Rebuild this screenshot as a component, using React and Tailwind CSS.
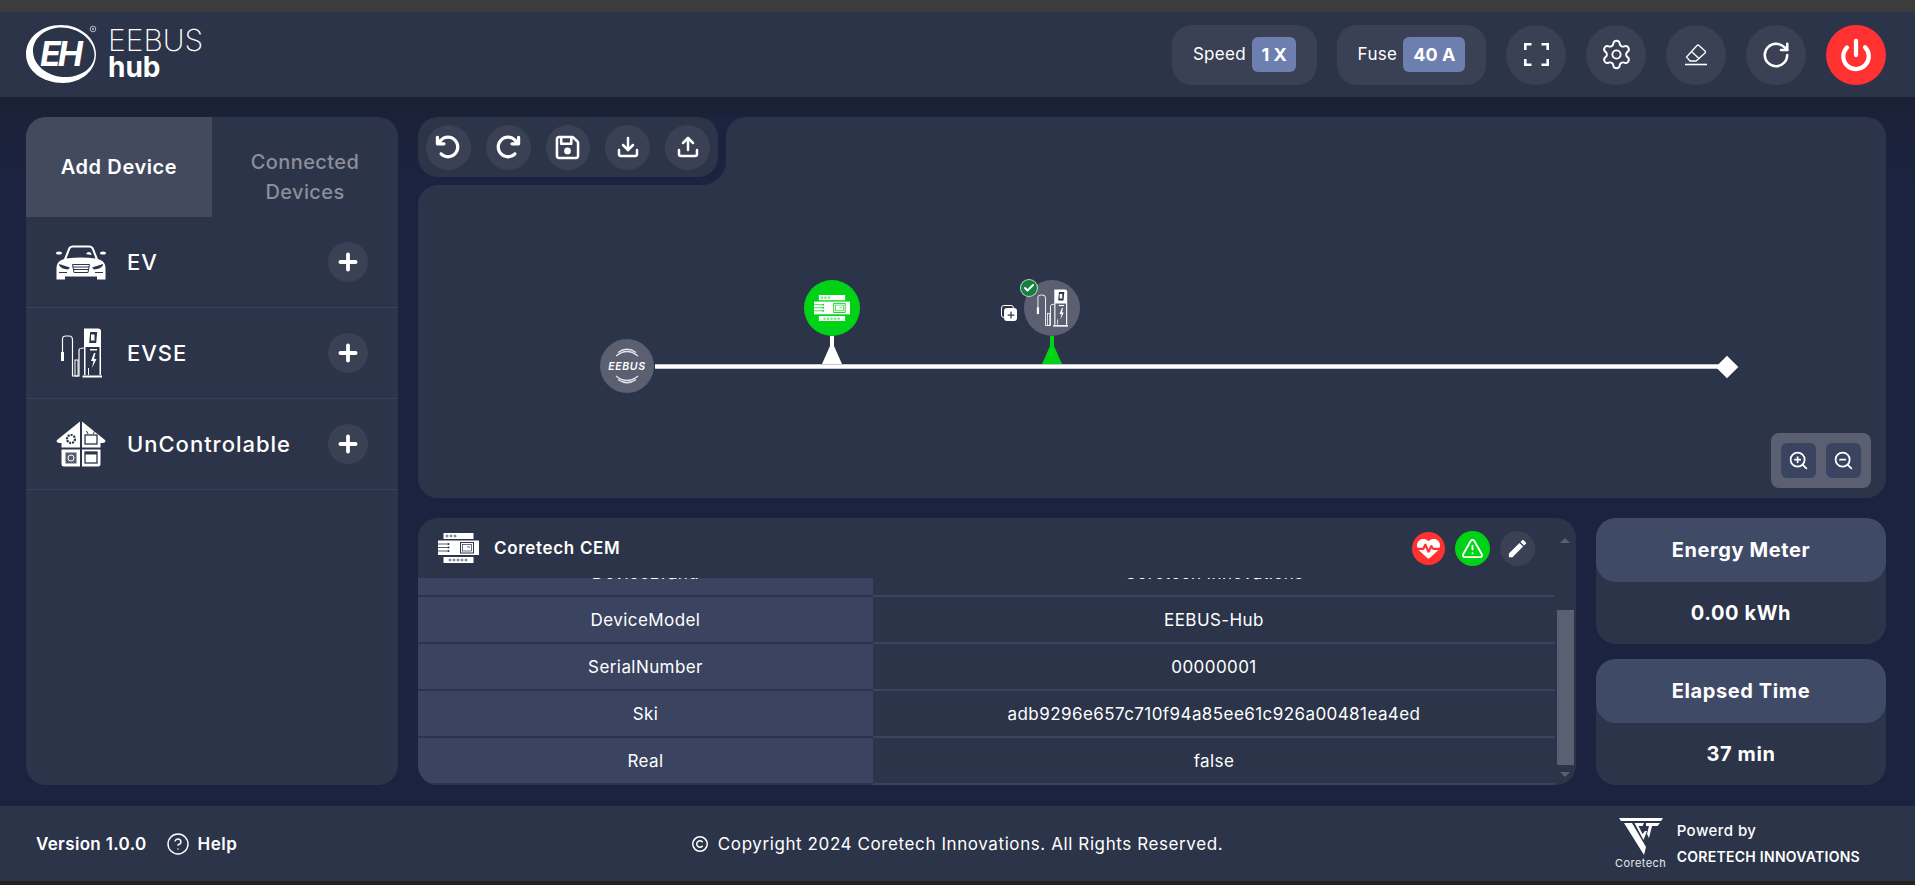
import { Plus, RotateCw, Settings, Power, Download, Upload, ZoomIn, ZoomOut, CircleHelp, TriangleAlert, Check } from 'lucide-react';
import { FaArrowRotateLeft, FaArrowRotateRight, FaRegFloppyDisk, FaHeartPulse, FaRegCopyright } from 'react-icons/fa6';
import { MdEdit } from 'react-icons/md';

function EhLogo() {
  return (
    <svg width="78" height="60" viewBox="0 0 78 60" className="shrink-0">
      <path
        fillRule="evenodd"
        fill="#fff"
        d="M35 0C54 0 70 13 70 29C70 46 55 58 37 58C17 58 0 46 0 29C0 13 15 0 35 0ZM35 2.500C21 2.500 7 12 7 26C7 40 21 51 37 52C53 53 69 44 68.500 29C68 15 53 2.500 35 2.500Z"
      />
      <text x="14" y="41" fill="#fff" fontSize="34" fontWeight="700" fontStyle="italic" fontFamily="Inter, sans-serif" letterSpacing="-3">EH</text>
      <circle cx="67" cy="4" r="2.800" fill="none" stroke="#c8cad2" strokeWidth="0.900" />
      <circle cx="67" cy="4" r="1" fill="#c8cad2" />
    </svg>
  );
}

function CarIcon() {
  return (
    <svg width="50" height="35" viewBox="0 0 50 35">
      <path fill="#fff" d="M8 14L12 4Q13 0.500 17 0.500H33Q37 0.500 38 4L42 14Q49 16 49.500 22V34.500H41V31.500H9V34.500H0.500V22Q1 16 8 14Z" />
      <ellipse cx="3" cy="8" rx="3" ry="1.600" fill="#fff" />
      <ellipse cx="47" cy="8" rx="3" ry="1.600" fill="#fff" />
      <path fill="#2c3449" d="M10.500 13.500L14 4.500Q14.500 2.500 16.500 2.500H33.500Q35.500 2.500 36 4.500L39.500 13.500Q25 11.500 10.500 13.500Z" />
      <path fill="#fff" d="M30 9Q32 5.500 35 8L35.500 10Q32 9.500 30 9Z" />
      <path fill="#2c3449" d="M3 19L14 22.500L12 24.500Q5 24 3 20Z M47 19L36 22.500L38 24.500Q45 24 47 20Z" />
      <path fill="none" stroke="#2c3449" strokeWidth="1" d="M16.500 19.500H33.500L32 27.500H18Z M17 22H33 M17.500 24.500H32.500" />
      <path fill="#2c3449" d="M3 27H11V28H3Z M39 27H47V28H39Z" />
    </svg>
  );
}

function EvseIcon({ className = '' }) {
  return (
    <svg width="42" height="50" viewBox="0 0 42 50" className={className}>
      <path fill="none" stroke="#fff" strokeWidth="1.200" d="M2.500 24V11Q2.500 8 6 8H9Q12.500 8 12.500 12V48H19V22Q19 20 24 20" />
      <rect x="1" y="24" width="3" height="9" fill="#fff" />
      <rect x="15" y="32" width="3" height="16" fill="none" stroke="#fff" strokeWidth="1" />
      <path fill="#fff" d="M24 0.500H38Q41 0.500 41 3V47H39.500V19H25.500V47H24Z" />
      <rect x="29" y="4" width="7" height="11" fill="#2c3449" transform="skewX(-5) translate(1.500 0)" />
      <rect x="31" y="6.500" width="3.500" height="6" fill="#fff" />
      <rect x="30" y="21" width="7" height="1.500" fill="#fff" />
      <path fill="#fff" d="M34 25L31 33H33.500L32 40L36.500 31H34L35.500 25Z" />
      <rect x="28" y="40" width="1" height="7" fill="#fff" />
      <rect x="22.500" y="47.500" width="19.500" height="2" fill="#fff" />
    </svg>
  );
}

function HouseIcon() {
  return (
    <svg width="50" height="46" viewBox="0 0 50 46">
      <path fill="#fff" d="M24 0.500V26.500H5.500V22H3Q-0.500 21.500 1 19Z M26 0.500V26.500H44.500V22H47Q50.500 21.500 49 19Z" />
      <path fill="#fff" d="M5.500 28.500H24V45.500H8Q5.500 45.500 5.500 43Z M26 28.500H44.500V43Q44.500 45.500 42 45.500H26Z" />
      <circle cx="15" cy="18" r="4" fill="none" stroke="#2c3449" strokeWidth="2.200" strokeDasharray="2 1" />
      <rect x="29" y="14" width="12" height="9" fill="none" stroke="#2c3449" strokeWidth="1.300" />
      <path fill="none" stroke="#2c3449" strokeWidth="1" d="M32 13L30.500 10M37 13L39 10" />
      <rect x="9.500" y="31.500" width="11" height="11" fill="#2c3449" opacity="0.800" />
      <circle cx="15" cy="37" r="3" fill="none" stroke="#fff" strokeWidth="1" />
      <rect x="29" y="31" width="12" height="11" fill="none" stroke="#2c3449" strokeWidth="1.300" />
      <rect x="29" y="31" width="12" height="2.500" fill="#2c3449" />
    </svg>
  );
}

function CemIcon({ width = 41, detail = '#2c3449' }) {
  const topDots = [9, 13, 17];
  const bottomDots = [12, 16, 20, 24, 28];
  return (
    <svg width={width} viewBox="0 0 41 30">
      <rect x="5.500" y="0" width="30" height="6" fill="#fff" />
      <rect x="0" y="7.500" width="41" height="14.500" fill="#fff" />
      <rect x="5.500" y="24" width="30" height="6" fill="#fff" />
      {topDots.map((x) => (
        <circle key={x} cx={x} cy="3" r="1" fill="none" stroke={detail} strokeWidth="0.700" />
      ))}
      {bottomDots.map((x) => (
        <circle key={x} cx={x} cy="27" r="1" fill="none" stroke={detail} strokeWidth="0.700" />
      ))}
      <path stroke={detail} strokeWidth="0.800" d="M0 11H10M0 14.500H10M0 18H10" />
      <circle cx="10.500" cy="11" r="1" fill={detail} />
      <circle cx="10.500" cy="14.500" r="1" fill={detail} />
      <circle cx="10.500" cy="18" r="1" fill={detail} />
      <rect x="22.500" y="9.500" width="13" height="10.500" fill="none" stroke={detail} strokeWidth="1" />
      <rect x="24.500" y="11.500" width="9" height="6.500" fill="none" stroke={detail} strokeWidth="0.700" />
      <path fill="none" stroke={detail} strokeWidth="0.700" d="M29 14H32" />
    </svg>
  );
}

function EebusMark() {
  return (
    <svg width="54" height="54" viewBox="0 0 54 54">
      <circle cx="27" cy="27" r="27" fill="#5a6072" />
      <path fill="none" stroke="#e6e7eb" strokeWidth="1.300" d="M16 17Q27 8 38 17 M18 13.500Q27 7 36 13.500 M16 37Q27 46 38 37 M18 40.500Q27 47 36 40.500" />
      <text x="27" y="31" textAnchor="middle" fill="#fff" fontSize="10.500" fontWeight="600" fontStyle="italic" fontFamily="Inter, sans-serif" letterSpacing="0.600">EEBUS</text>
    </svg>
  );
}

function CoretechLogo() {
  return (
    <div className="flex flex-col items-center w-[52px]">
      <svg width="44" height="37" viewBox="0 0 44 37">
        <path fill="#fff" d="M0 0H44L42 3H2Z" />
        <path fill="#fff" d="M5 5H13L27 29L25 37Z" />
        <path fill="#fff" d="M15.500 5H25L23.500 8H19.500L23.500 16L26 13H28L24.500 22Z" />
        <path fill="#fff" d="M27 5H41L38.500 8H33L30 20L28 16L30 8H27Z" />
      </svg>
      <span className="text-[11px] leading-none mt-[3px] tracking-[0.04em] text-[#e8e9ec]">Coretech</span>
    </div>
  );
}

function FullscreenIcon() {
  return (
    <svg width="25" height="23" viewBox="0 0 25 23" fill="none" stroke="#fff" strokeWidth="2.600">
      <path d="M1.300 7V1.300H7.500M17.500 1.300H23.700V7M23.700 16V21.700H17.500M7.500 21.700H1.300V16" />
    </svg>
  );
}

function EraserIcon() {
  return (
    <svg width="24" height="22" viewBox="0 0 24 22" fill="none" stroke="#fff" strokeWidth="1.300">
      <path d="M6 17L2.500 13L13 1.500Q14 0.500 15 1.500L21 7Q22 8 21 9L12 17Z" />
      <path d="M7.500 7.500L15.500 15" />
      <path d="M1 20.500H23" strokeWidth="1.600" />
    </svg>
  );
}

function HeaderCircle({ children, className = 'bg-[#3b4154]' }) {
  return <div className={`w-[60px] h-[60px] rounded-full flex items-center justify-center ${className}`}>{children}</div>;
}

function HeaderStat({ label, value, className, badgeWidth }) {
  return (
    <div className={`h-[60px] rounded-[20px] bg-[#3b4154] flex items-center justify-center gap-[6px] ${className}`}>
      <span className="text-[17px] text-white tracking-[0.02em]">{label}</span>
      <span className={`h-[35px] rounded-[6px] bg-[#6d7fae] flex items-center justify-center text-[18px] font-bold text-white ${badgeWidth}`}>{value}</span>
    </div>
  );
}

function DeviceRow({ icon, name }) {
  return (
    <div className="h-[91px] border-b border-[#38415c] pl-[30px] pr-[30px] flex items-center">
      <div className="w-[50px] flex justify-center shrink-0">{icon}</div>
      <span className="ml-[21px] text-[22px] font-medium text-white tracking-[0.045em]">{name}</span>
      <div className="ml-auto w-10 h-10 rounded-full bg-[#3b4154] flex items-center justify-center">
        <Plus size={26} color="#fff" strokeWidth={3.500} />
      </div>
    </div>
  );
}

function ToolButton({ children }) {
  return <div className="w-[45px] h-[45px] rounded-full bg-[#3b4154] flex items-center justify-center text-white">{children}</div>;
}

function ZoomButton({ children }) {
  return <div className="w-[35px] h-[35px] rounded-[6px] bg-[#3a4461] flex items-center justify-center">{children}</div>;
}

function Pin({ color, className }) {
  return (
    <svg width="20" height="28" viewBox="0 0 20 28" className={`absolute ${className}`}>
      <path fill={color} d="M8 0H12V10L20 28H0L8 10Z" />
    </svg>
  );
}

function StatCard({ title, value }) {
  return (
    <div className="flex-1 rounded-[20px] bg-[#2c3449] flex flex-col">
      <div className="h-[64px] rounded-[20px] bg-[#3f4a67] flex items-center justify-center text-[20px] font-bold text-white tracking-[0.03em]">{title}</div>
      <div className="flex-1 flex items-center justify-center text-[20px] font-bold text-white tracking-[0.03em]">{value}</div>
    </div>
  );
}

const rows = [
  ['DeviceBrand', 'Coretech Innovations'],
  ['DeviceModel', 'EEBUS-Hub'],
  ['SerialNumber', '00000001'],
  ['Ski', 'adb9296e657c710f94a85ee61c926a00481ea4ed'],
  ['Real', 'false'],
];

export default function App() {
  return (
    <div className="h-[885px] flex flex-col overflow-hidden bg-[#1c2340] font-['Inter',sans-serif] text-white">
      <div className="h-3 bg-[#3c3c3c]" />

      <header className="h-[85px] bg-[#2c3449] pl-[26px] pr-[29px] flex items-center">
        <div className="flex items-center">
          <EhLogo />
          <div className="flex flex-col ml-[4px] -mt-[2px]">
            <span className="text-[30px] leading-[27px] font-extralight">EEBUS</span>
            <span className="text-[28px] leading-[26px] font-bold">hub</span>
          </div>
        </div>
        <div className="ml-auto flex items-center gap-5">
          <HeaderStat label="Speed" value="1 X" className="w-[145px]" badgeWidth="w-[44px]" />
          <HeaderStat label="Fuse" value="40 A" className="w-[149px]" badgeWidth="w-[62px]" />
          <HeaderCircle><FullscreenIcon /></HeaderCircle>
          <HeaderCircle><Settings size={33} color="#fff" strokeWidth={1.400} /></HeaderCircle>
          <HeaderCircle><EraserIcon /></HeaderCircle>
          <HeaderCircle><RotateCw size={30} color="#fff" strokeWidth={2} /></HeaderCircle>
          <HeaderCircle className="bg-[#ff3131]"><Power size={34} color="#fff" strokeWidth={3} /></HeaderCircle>
        </div>
      </header>

      <main className="flex-1 flex gap-5 pl-[26px] pr-[29px] pt-5 pb-[21px] bg-linear-to-b from-[#1a2136] to-[#1c2340] to-[12%]">
        <aside className="w-[372px] shrink-0 rounded-[20px] bg-[#2c3449] overflow-hidden">
          <div className="h-[100px] flex">
            <div className="w-[186px] bg-[#434a5e] flex items-center justify-center text-[20px] font-semibold tracking-[0.03em]">Add Device</div>
            <div className="flex-1 pt-[20px] flex items-center justify-center text-center text-[20px] leading-[30px] font-medium text-[#8b8f9b] tracking-[0.02em]">
              Connected
              <br />
              Devices
            </div>
          </div>
          <DeviceRow icon={<CarIcon />} name="EV" />
          <DeviceRow icon={<EvseIcon />} name="EVSE" />
          <DeviceRow icon={<HouseIcon />} name="UnControlable" />
        </aside>

        <div className="flex-1 flex flex-col gap-5 min-w-0">
          <section className="relative h-[381px] rounded-[20px] bg-[#2c3449] overflow-hidden">
            <div className="absolute left-0 top-0 pr-2 pb-2 bg-[#1c2340] rounded-br-[24px]">
              <div className="h-[60px] w-[300px] px-2 rounded-[20px] bg-[#2c3449] flex items-center gap-[15px]">
                <ToolButton><FaArrowRotateLeft size={26} /></ToolButton>
                <ToolButton><FaArrowRotateRight size={26} /></ToolButton>
                <ToolButton><FaRegFloppyDisk size={27} /></ToolButton>
                <ToolButton><Download size={24} strokeWidth={2.500} /></ToolButton>
                <ToolButton><Upload size={24} strokeWidth={2.500} /></ToolButton>
              </div>
            </div>
            <div className="absolute left-0 top-[68px] w-5 h-5 bg-[#1c2340]">
              <div className="w-5 h-5 rounded-tl-[20px] bg-[#2c3449]" />
            </div>
            <div className="absolute left-[308px] top-0 w-5 h-5 bg-[#1c2340]">
              <div className="w-5 h-5 rounded-tl-[20px] bg-[#2c3449]" />
            </div>

            <div className="absolute left-[237px] top-[247px] w-[1072px] h-[5px] bg-white border-y border-[#c4c7cf]" />
            <div className="absolute left-[182px] top-[222px]"><EebusMark /></div>
            <div className="absolute left-[1301px] top-[242px] w-4 h-4 bg-white rotate-45" />

            <Pin color="#ffffff" className="left-[404px] top-[219px]" />
            <div className="absolute left-[386px] top-[163px] w-14 h-14 rounded-full bg-[#00d315] flex items-center justify-center">
              <CemIcon width={36} detail="#00d315" />
            </div>

            <Pin color="#00d315" className="left-[624px] top-[219px]" />
            <div className="absolute left-[606px] top-[163px] w-14 h-14 rounded-full bg-[#5a6072] flex items-center justify-center">
              <EvseIcon className="w-[32px] h-[38px]" />
            </div>
            <div className="absolute left-[602px] top-[162px] w-[18px] h-[18px] rounded-full bg-[#15803d] border border-white/70 flex items-center justify-center">
              <Check size={12} color="#fff" strokeWidth={4} />
            </div>
            <div className="absolute left-[583px] top-[188px] w-[13px] h-[13px] rounded-[3px] border border-white" />
            <div className="absolute left-[586px] top-[191px] w-[13px] h-[13px] rounded-[3px] bg-white flex items-center justify-center">
              <Plus size={10} color="#2c3449" strokeWidth={3} />
            </div>

            <div className="absolute right-[15px] bottom-[10px] w-[100px] h-[55px] rounded-[8px] bg-[#5a6072] flex items-center justify-center gap-[10px]">
              <ZoomButton><ZoomIn size={21} color="#fff" strokeWidth={2} /></ZoomButton>
              <ZoomButton><ZoomOut size={21} color="#fff" strokeWidth={2} /></ZoomButton>
            </div>
          </section>

          <div className="flex-1 flex gap-5 min-h-0">
            <section className="flex-1 min-w-0 rounded-[20px] bg-[#2c3449] overflow-hidden flex flex-col">
              <div className="h-[60px] shrink-0 pl-5 pr-[41px] flex items-center">
                <CemIcon width={41} />
                <span className="ml-[15px] mt-[2px] text-[17px] font-semibold tracking-[0.04em]">Coretech CEM</span>
                <div className="ml-auto flex items-center gap-[10px]">
                  <div className="w-[33px] h-[33px] rounded-full bg-[#ff3131] flex items-center justify-center"><FaHeartPulse size={23} color="#fff" /></div>
                  <div className="w-[35px] h-[35px] rounded-full bg-[#00d315] flex items-center justify-center"><TriangleAlert size={23} color="#fff" strokeWidth={2} /></div>
                  <div className="w-[35px] h-[35px] rounded-full bg-[#3b4154] flex items-center justify-center"><MdEdit size={23} color="#fff" /></div>
                </div>
              </div>
              <div className="flex-1 flex min-h-0">
                <div className="flex-1 min-w-0 overflow-hidden">
                  <div className="-mt-[28px]">
                    {rows.map(([name, value]) => (
                      <div key={name} className="h-[47px] grid grid-cols-[455px_1fr] text-[17px] tracking-[0.025em]">
                        <div className="bg-[#3a4460] border-b-2 border-[#2c3449] pt-[3px] flex items-center justify-center">{name}</div>
                        <div className="border-b-2 border-[#3a4460] pt-[3px] flex items-center justify-center">{value}</div>
                      </div>
                    ))}
                  </div>
                </div>
                <div className="w-[21px] shrink-0 relative">
                  <div className="absolute right-[2px] top-[32px] w-[17px] h-[155px] bg-[#5a6072]" />
                  <div className="absolute left-[5px] top-[-40px] w-0 h-0 border-x-[5px] border-x-transparent border-b-[5px] border-b-[#5a6072]" />
                  <div className="absolute left-[5px] bottom-[8px] w-0 h-0 border-x-[5px] border-x-transparent border-t-[5px] border-t-[#5a6072]" />
                </div>
              </div>
            </section>
            <div className="w-[290px] shrink-0 flex flex-col gap-[15px]">
              <StatCard title="Energy Meter" value="0.00 kWh" />
              <StatCard title="Elapsed Time" value="37 min" />
            </div>
          </div>
        </div>
      </main>

      <footer className="h-[75px] bg-[#2c3449] pl-9 pr-[55px] flex items-center">
        <div className="flex-1 flex items-center">
          <span className="mt-[2px] text-[17px] font-semibold tracking-[0.02em]">Version 1.0.0</span>
          <CircleHelp size={24} color="#fff" strokeWidth={1.400} className="ml-[20px]" />
          <span className="ml-[7px] mt-[2px] text-[17px] font-semibold tracking-[0.03em]">Help</span>
        </div>
        <div className="ml-[19px] flex items-center gap-[10px] text-[17px] tracking-[0.035em]">
          <FaRegCopyright size={16} color="#fff" />
          <span className="mt-[2px]">Copyright 2024 Coretech Innovations. All Rights Reserved.</span>
        </div>
        <div className="flex-1 flex items-center justify-end gap-[10px]">
          <CoretechLogo />
          <div className="flex flex-col gap-[11px]">
            <span className="text-[15px] leading-[15px] font-medium tracking-[0.03em]">Powerd by</span>
            <span className="text-[14px] leading-[15px] font-semibold tracking-[0.02em]">CORETECH INNOVATIONS</span>
          </div>
        </div>
      </footer>
      <div className="h-1 bg-[#222222]" />
    </div>
  );
}
